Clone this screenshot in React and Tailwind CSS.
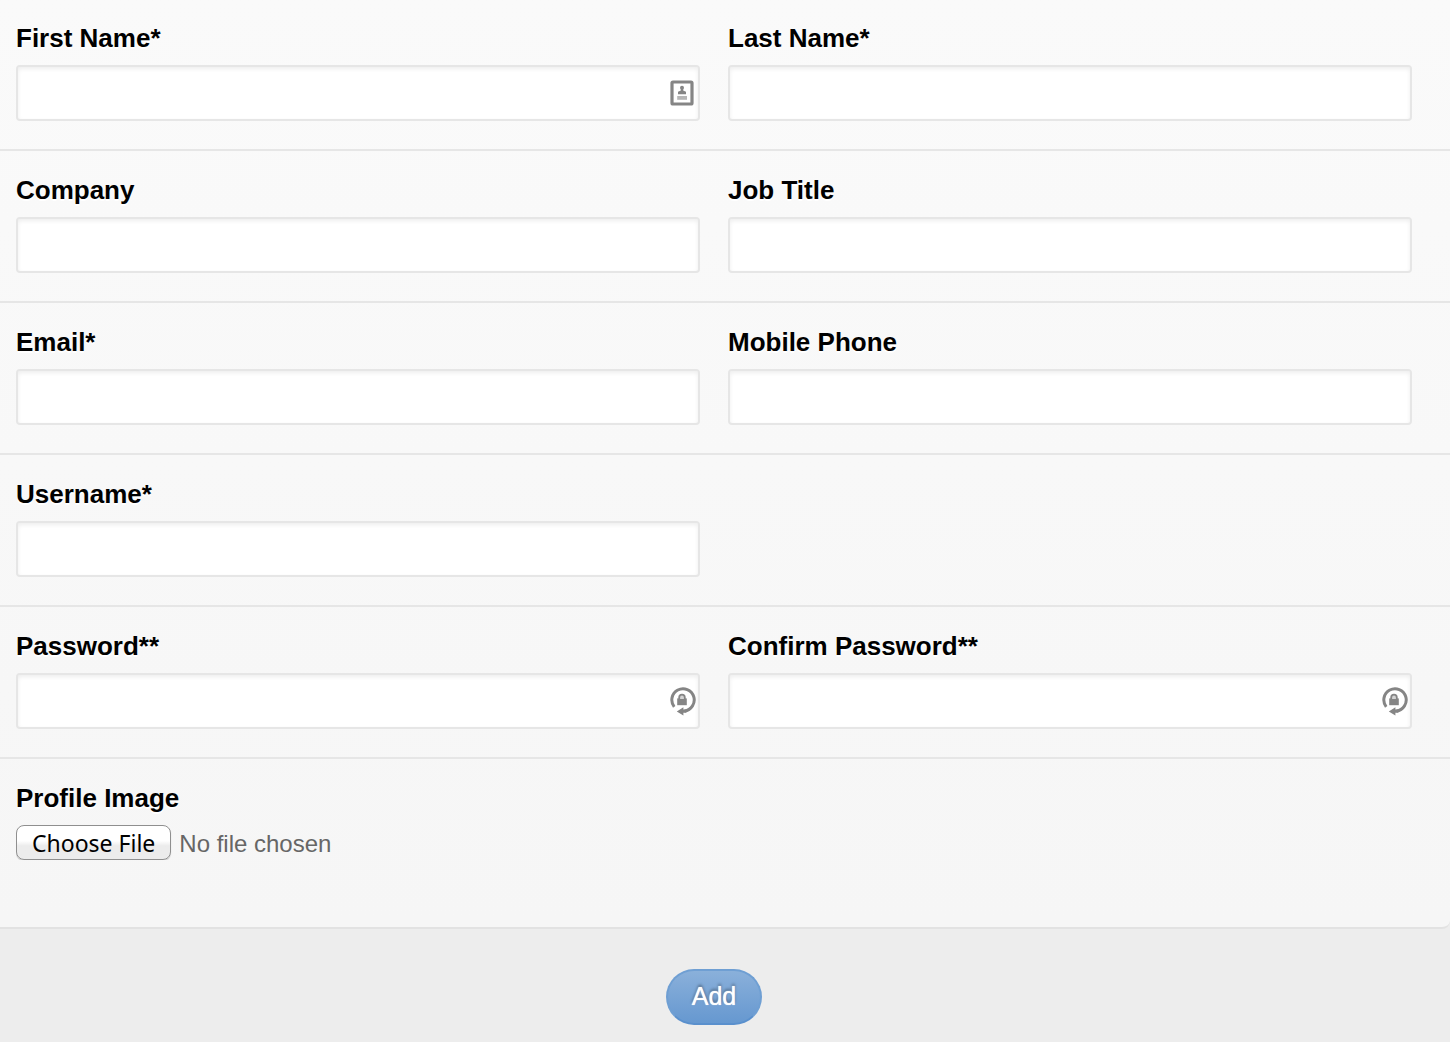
function CardIcon() {
  return (
    <svg className="h-7 w-7" viewBox="0 0 28 28" fill="#858585" aria-hidden="true">
      <rect x="4" y="3" width="20" height="22" rx="1" fill="none" stroke="#858585" strokeWidth="3.2" />
      <circle cx="14" cy="8.8" r="2" />
      <path d="M12.8 9.6h2.4v2l2.8 1.2v2.4h-8v-2.4l2.8-1.2z" />
      <path d="M9.2 17h9.8v3.8H9.2z" opacity="0.6" />
    </svg>
  );
}

function LockIcon() {
  return (
    <svg className="h-8 w-7" viewBox="0 0 28 32" fill="#858585" aria-hidden="true">
      <path d="M6.2 21.8A11.2 11.2 0 1 1 16.5 26" fill="none" stroke="#858585" strokeWidth="3" />
      <path d="M8.8 26.4l6.6-4.2v2.4h3v3.2h-3v2.8z" />
      <path d="M9.2 13.4h9.6v6.8H9.2z" />
      <path d="M11.2 14v-1.6a2.8 2.8 0 0 1 5.6 0V14" fill="#d4d4d4" stroke="#858585" strokeWidth="1.8" />
    </svg>
  );
}

const labelClass =
  "block text-[26px] leading-[38px] font-bold text-black [text-shadow:0_2px_0_#fff]";

function Field({ id, label, type = "text", icon }) {
  return (
    <div>
      <label htmlFor={id} className={labelClass}>{label}</label>
      <div className="relative mt-2">
        <input
          id={id}
          type={type}
          className="block h-14 w-full rounded border-2 border-[#e6e6e6] bg-white px-3 text-2xl text-[#666] shadow-[inset_0_2px_4px_rgba(0,0,0,0.07)] outline-none focus:border-[#8ab0da]"
        />
        {icon && (
          <span className="pointer-events-none absolute inset-y-0 right-1 flex items-center">{icon}</span>
        )}
      </div>
    </div>
  );
}

function Row({ children }) {
  return (
    <div className="grid grid-cols-2 gap-7 border-b-2 border-[#e6e6e6] pt-5 pr-[38px] pb-7 pl-4 first:pt-[19px]">
      {children}
    </div>
  );
}

export default function App() {
  return (
    <form
      className="min-h-screen bg-[#ededed] font-['Liberation_Sans',Arial,sans-serif]"
      onSubmit={(e) => e.preventDefault()}
    >
      <div className="rounded-br-lg border-b-2 border-[#e2e2e2] bg-linear-to-b from-[#fafafa] to-[#f6f6f6]">
        <Row>
          <Field id="first" label="First Name*" icon={<CardIcon />} />
          <Field id="last" label="Last Name*" />
        </Row>
        <Row>
          <Field id="company" label="Company" />
          <Field id="job" label="Job Title" />
        </Row>
        <Row>
          <Field id="email" label="Email*" type="email" />
          <Field id="phone" label="Mobile Phone" type="tel" />
        </Row>
        <Row>
          <Field id="username" label="Username*" />
        </Row>
        <Row>
          <Field id="password" label="Password**" type="password" icon={<LockIcon />} />
          <Field id="confirm" label="Confirm Password**" type="password" icon={<LockIcon />} />
        </Row>
        <div className="pt-5 pr-[38px] pb-[67px] pl-4">
          <label htmlFor="image" className={labelClass}>Profile Image</label>
          <input
            id="image"
            type="file"
            className="mt-2 block w-full text-2xl leading-8 text-[#666] file:mr-2 file:h-[35px] file:rounded-lg file:border file:border-solid file:border-[#8f8f8f] file:bg-linear-to-b file:from-white file:from-45% file:to-[#ececec] file:to-60% file:px-[15px] file:font-['Noto_Sans',sans-serif] file:text-[23px] file:leading-8 file:text-black file:shadow-[0_1px_1px_rgba(0,0,0,0.2)]"
          />
        </div>
      </div>
      <div className="flex justify-center pt-10 pr-[38px] pb-4 pl-4">
        <button
          type="submit"
          className="h-14 w-24 rounded-full border-2 border-[#6f9fd3] border-b-[#5a90cd] bg-linear-to-b from-[#8ab0da] to-[#6698d0] text-[25px] text-white [text-shadow:0_0_1px_#fff,0_-2px_3px_rgba(0,0,0,0.4)]"
        >
          Add
        </button>
      </div>
    </form>
  );
}
